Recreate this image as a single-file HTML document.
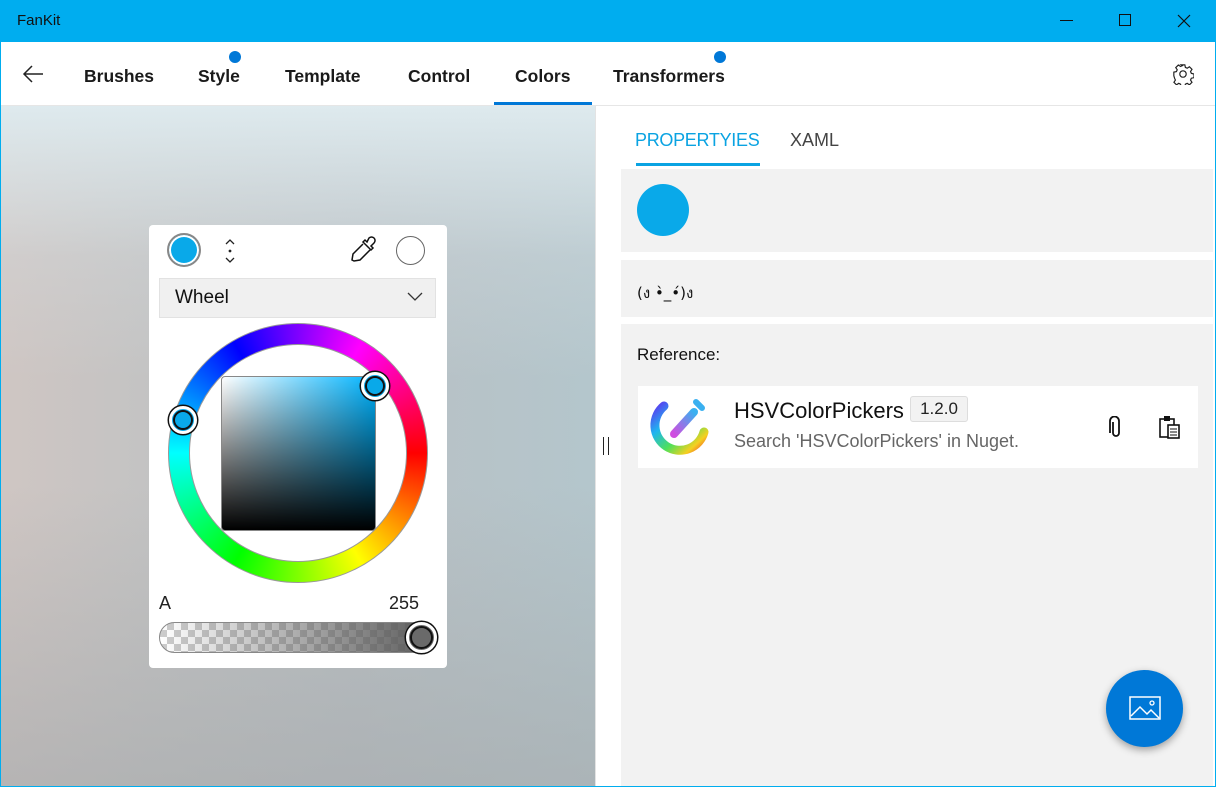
<!DOCTYPE html>
<html><head><meta charset="utf-8"><style>
*{margin:0;padding:0;box-sizing:border-box}
body{width:1216px;height:787px;overflow:hidden;position:relative;font-family:"Liberation Sans",sans-serif;background:#fff}
.abs{position:absolute}
#title{left:0;top:0;width:1216px;height:42px;background:#00adef}
#nav{left:0;top:42px;width:1216px;height:64px;background:#fff;border-bottom:1px solid #e6e6e6}
.tab{position:absolute;top:24px;font-size:17.5px;font-weight:bold;color:#1a1a1a}
#left{left:1px;top:106px;width:594px;height:680px;background:
linear-gradient(180deg,rgba(222,234,238,1) 0%,rgba(214,222,226,0.3) 22%,rgba(0,0,0,0) 40%),
linear-gradient(90deg,#cfc6c3 0%,#c3c3c3 25%,#b9c0c4 60%,#b4c6cc 100%);}
#left:after{content:"";position:absolute;left:0;right:0;bottom:0;height:300px;background:linear-gradient(180deg,rgba(160,170,172,0) 0%,rgba(165,168,170,.6) 100%)}
.panel{position:absolute;left:621px;width:592px;background:#f2f2f2}
</style></head><body>
<div class="abs" style="left:0;top:0;width:1216px;height:787px;border:1px solid #00adef;z-index:9;pointer-events:none"></div>
<div id="title" class="abs">
 <div class="abs" style="left:17px;top:12px;font-size:15px;color:#111">FanKit</div>
 <div class="abs" style="left:1060px;top:20px;width:13px;height:1px;background:#111"></div>
 <div class="abs" style="left:1119px;top:14px;width:12px;height:12px;border:1px solid #111"></div>
 <svg class="abs" style="left:1177px;top:14px" width="14" height="14"><path d="M1 1L13 13M13 1L1 13" stroke="#111" stroke-width="1.2"/></svg>
</div>
<div id="nav" class="abs">
 <svg class="abs" style="left:22px;top:23px" width="22" height="18"><path d="M21 9H2M10 1L2 9L10 17" stroke="#222" stroke-width="1.5" fill="none"/></svg>
 <div class="tab" style="left:84px">Brushes</div>
 <div class="tab" style="left:198px">Style</div>
 <div class="abs" style="left:229px;top:9px;width:12px;height:12px;border-radius:50%;background:#0078d7"></div>
 <div class="tab" style="left:285px">Template</div>
 <div class="tab" style="left:408px">Control</div>
 <div class="tab" style="left:515px">Colors</div>
 <div class="abs" style="left:494px;top:60px;width:98px;height:3px;background:#0078d7"></div>
 <div class="tab" style="left:613px">Transformers</div>
 <div class="abs" style="left:714px;top:9px;width:12px;height:12px;border-radius:50%;background:#0078d7"></div>
 <svg class="abs" style="left:1172px;top:21px" width="22" height="22" viewBox="0 0 24 24"><path d="M10 2h4l.6 2.8 2 .9 2.4-1.6 2.8 2.8-1.6 2.4.9 2 2.9.7v4l-2.9.6-.9 2 1.6 2.4-2.8 2.8-2.4-1.6-2 .9-.6 2.9h-4l-.7-2.9-2-.9-2.4 1.6-2.8-2.8 1.6-2.4-.9-2L2 14v-4l2.8-.6.9-2L4.1 5l2.8-2.8 2.4 1.6 2-.9z" fill="none" stroke="#222" stroke-width="1.3"/><circle cx="12" cy="12" r="3.5" fill="none" stroke="#222" stroke-width="1.3"/></svg>
</div>
<div id="left" class="abs"></div>
<div class="abs" style="left:595px;top:106px;width:1px;height:681px;background:#e3e3e3"></div>
<div class="abs" style="left:603px;top:437px;height:18px;border-left:1px solid #222;border-right:1px solid #222;width:6px"></div>
<!-- picker -->
<div class="abs" style="left:149px;top:225px;width:298px;height:443px;background:#fff;border-radius:4px">
 <div class="abs" style="left:18px;top:8px;width:34px;height:34px;border-radius:50%;border:2px solid #888;background:#09a9e9;box-shadow:inset 0 0 0 2px #fff"></div>
 <svg class="abs" style="left:74px;top:13px" width="14" height="26"><path d="M3 6l4-4 4 4M3 20l4 4 4-4" stroke="#222" stroke-width="1.3" fill="none"/><circle cx="7" cy="13" r="1.4" fill="#222"/></svg>
 <svg class="abs" style="left:200px;top:10px" width="30" height="30" viewBox="0 0 30 30"><path d="M20 3a3 3 0 0 1 5 5l-3 3 2 2-2 2-8-8 2-2 2 2z" fill="none" stroke="#111" stroke-width="1.5"/><path d="M14 9L4 19l-1 6 2 1 6-1 10-10" fill="none" stroke="#111" stroke-width="1.5"/></svg>
 <div class="abs" style="left:247px;top:11px;width:29px;height:29px;border-radius:50%;border:1px solid #666"></div>
 <div class="abs" style="left:10px;top:53px;width:277px;height:40px;background:#f0f0f0;border:1px solid #e2e2e2"></div>
 <div class="abs" style="left:26px;top:62px;font-size:19px;color:#111">Wheel</div>
 <svg class="abs" style="left:258px;top:67px" width="16" height="10"><path d="M1 1l7 7 7-7" stroke="#333" stroke-width="1.3" fill="none"/></svg>
 <div class="abs" style="left:19px;top:98px;width:260px;height:260px;border-radius:50%;background:conic-gradient(hsl(270,100%,50%),hsl(300,100%,50%),hsl(330,100%,50%),hsl(360,100%,50%),hsl(30,100%,50%),hsl(60,100%,50%),hsl(90,100%,50%),hsl(120,100%,50%),hsl(150,100%,50%),hsl(180,100%,50%),hsl(210,100%,50%),hsl(240,100%,50%),hsl(270,100%,50%));border:1px solid #999"></div>
 <div class="abs" style="left:40px;top:119px;width:218px;height:218px;border-radius:50%;background:#fff;border:1px solid #999"></div>
 <div class="abs" style="left:72px;top:151px;width:155px;height:155px;border-radius:4px;border:1px solid #888;background:linear-gradient(180deg,rgba(0,0,0,0),#000),linear-gradient(90deg,#fff,#00b4ff)"></div>
 <div class="abs" style="left:20px;top:181px;width:28px;height:28px;border-radius:50%;border:3px solid #fff;box-shadow:0 0 0 1.5px #111;background:#09a9e9;outline:2px solid #111;outline-offset:-6px"></div>
 <div class="abs" style="left:212px;top:147px;width:28px;height:28px;border-radius:50%;border:3px solid #fff;box-shadow:0 0 0 1.5px #111;background:#09a9e9;outline:2px solid #111;outline-offset:-6px"></div>
 <div class="abs" style="left:10px;top:368px;font-size:18px;color:#222">A</div>
 <div class="abs" style="left:240px;top:368px;font-size:18px;color:#222">255</div>
 <div class="abs" style="left:10px;top:397px;width:277px;height:31px;border-radius:16px;border:1px solid #888;background:linear-gradient(90deg,rgba(90,90,90,0),rgba(90,90,90,1)),repeating-conic-gradient(#ccc 0 25%,#fff 0 50%) 0 0/14px 14px"></div>
 <div class="abs" style="left:257px;top:397px;width:31px;height:31px;border-radius:50%;border:3px solid #fff;box-shadow:0 0 0 1.5px #111;background:#6a6a6a;outline:2px solid #111;outline-offset:-6px"></div>
</div>
<!-- right -->
<div class="abs" style="left:635px;top:130px;font-size:18px;color:#0aa3e2;letter-spacing:-0.3px">PROPERTYIES</div>
<div class="abs" style="left:636px;top:163px;width:124px;height:3px;background:#0aa3e2"></div>
<div class="abs" style="left:790px;top:130px;font-size:18px;color:#444">XAML</div>
<div class="panel" style="top:169px;height:83px"><div class="abs" style="left:16px;top:15px;width:52px;height:52px;border-radius:50%;background:#09a9e9"></div></div>
<div class="panel" style="top:260px;height:57px"><div class="abs" style="left:16px;top:21px;font-size:15px;color:#111;font-family:'DejaVu Sans',sans-serif">(ง •̀_•́)ง</div></div>
<div class="panel" style="top:324px;height:463px">
 <div class="abs" style="left:16px;top:21px;font-size:17px;color:#111">Reference:</div>
 <div class="abs" style="left:17px;top:62px;width:560px;height:82px;background:#fff">
  <svg class="abs" style="left:10px;top:10px" width="64" height="62" viewBox="0 0 64 62"><defs><linearGradient id="g" x1="0" y1="0" x2="1" y2="1"><stop offset="0" stop-color="#5a3cf0"/><stop offset=".3" stop-color="#1fb5f0"/><stop offset=".6" stop-color="#4ee05a"/><stop offset=".85" stop-color="#f5d020"/><stop offset="1" stop-color="#f25a2a"/></linearGradient><linearGradient id="h" x1="0" y1="1" x2="1" y2="0"><stop offset="0" stop-color="#d04ee0"/><stop offset="1" stop-color="#3ab0f0"/></linearGradient></defs><path d="M16 10A25 25 0 1 0 56 36" fill="none" stroke="url(#g)" stroke-width="9" stroke-linecap="round"/><path d="M26 38L46 16" stroke="url(#h)" stroke-width="8" stroke-linecap="round"/><path d="M48 6l6 6" stroke="#3ab0f0" stroke-width="6" stroke-linecap="round"/></svg>
  <div class="abs" style="left:96px;top:12px;font-size:22px;color:#111">HSVColorPickers</div>
  <div class="abs" style="left:272px;top:10px;width:58px;height:26px;border:1px solid #ddd;background:#f2f2f2;border-radius:3px;font-size:17px;color:#222;text-align:center;line-height:24px">1.2.0</div>
  <div class="abs" style="left:96px;top:45px;font-size:18px;color:#666">Search 'HSVColorPickers' in Nuget.</div>
  <svg class="abs" style="left:471px;top:30px" width="14" height="24"><path d="M4 6v11a3 3 0 0 0 6 0V5a4.5 4.5 0 0 0-9 0v12" fill="none" stroke="#111" stroke-width="1.8"/></svg>
  <svg class="abs" style="left:520px;top:28px" width="22" height="26"><rect x="2" y="5" width="14" height="18" fill="none" stroke="#111" stroke-width="1.6"/><rect x="6" y="2" width="6" height="5" fill="#111"/><rect x="10" y="11" width="11" height="13" fill="#fff" stroke="#111" stroke-width="1.6"/><path d="M12 15h7M12 18h7M12 21h7" stroke="#111"/></svg>
 </div>
</div>
<div class="abs" style="left:1106px;top:670px;width:77px;height:77px;border-radius:50%;background:#0078d7;box-shadow:0 3px 8px rgba(0,0,0,.35)">
 <svg class="abs" style="left:23px;top:26px" width="32" height="24"><rect x="1" y="1" width="30" height="22" fill="none" stroke="#fff" stroke-width="1.5"/><path d="M2 20l9-9 7 7 4-4 8 8" fill="none" stroke="#fff" stroke-width="1.5"/><circle cx="23" cy="7" r="2" fill="none" stroke="#fff" stroke-width="1.3"/></svg>
</div>
</body></html>
